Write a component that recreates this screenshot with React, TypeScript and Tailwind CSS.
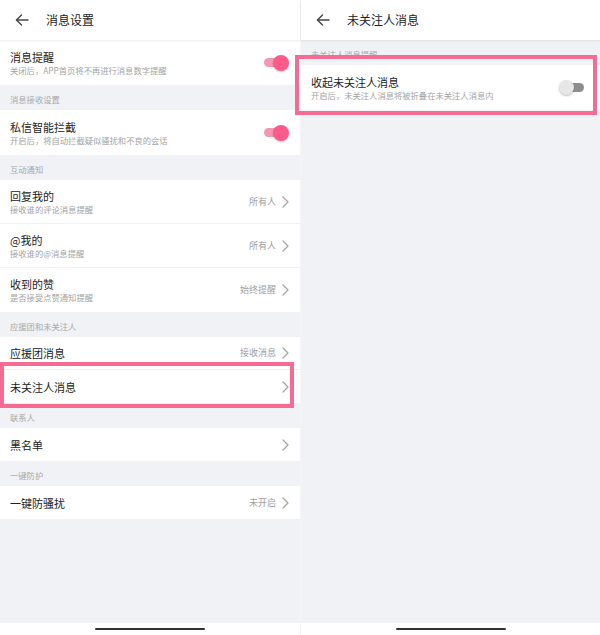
const font = { fontFamily: '"Noto Sans CJK SC", "Noto Sans", sans-serif' };

function BackArrow() {
  return (
    <svg width="14" height="12" viewBox="0 0 14 12" fill="none" stroke="#444" strokeWidth={1.4} strokeLinecap="round" strokeLinejoin="round">
      <path d="M13 6H1.5" />
      <path d="M6.5 1L1.5 6l5 5" />
    </svg>
  );
}

function Chevron() {
  return (
    <svg width="7" height="12" viewBox="0 0 7 12" fill="none" stroke="#a3a3a3" strokeWidth={1.2} strokeLinecap="round" strokeLinejoin="round">
      <path d="M1 1l5 5-5 5" />
    </svg>
  );
}

function ToggleOn() {
  return (
    <div className="relative w-[25px] h-4">
      <div className="absolute left-0 top-[3.5px] w-[21px] h-[9px] rounded-full bg-[#f596b2]" />
      <div className="absolute right-0 top-0 w-4 h-4 rounded-full bg-[#fb5a8b] shadow-[0_1px_2px_rgba(0,0,0,0.2)]" />
    </div>
  );
}

function ToggleOff() {
  return (
    <div className="relative w-[25px] h-[15px]">
      <div className="absolute right-0 top-[3px] w-[18px] h-[9px] rounded-full bg-[#8e8e8e]" />
      <div className="absolute left-0 top-0 w-[15px] h-[15px] rounded-full bg-[#e6e6e6] shadow-[0_1px_2px_rgba(0,0,0,0.25)]" />
    </div>
  );
}

function Header({ title }: { title: string }) {
  return (
    <div className="relative z-10 h-10 bg-white flex items-center shadow-[0_1px_2px_rgba(0,0,0,0.08)]">
      <div className="w-[46px] pl-[15px]">
        <BackArrow />
      </div>
      <span className="text-[12px] text-[#222]">{title}</span>
    </div>
  );
}

function Section({ label }: { label: string }) {
  return (
    <div className="h-[25px] flex items-center pt-[3px] pl-[10px] text-[8.3px] text-[#a8a8a8]">
      {label}
    </div>
  );
}

function SwitchRow({ title, sub, on }: { title: string; sub: string; on: boolean }) {
  return (
    <div className="h-[45px] bg-white flex items-center justify-between pl-[10px] pr-[11px]">
      <div className="flex flex-col">
        <span className="text-[11px] leading-[14px] text-[#222]">{title}</span>
        <span className="text-[8.3px] leading-[12px] text-[#a3a3a3]">{sub}</span>
      </div>
      {on ? <ToggleOn /> : <ToggleOff />}
    </div>
  );
}

function LinkRow({ title, sub, value, border }: { title: string; sub?: string; value?: string; border?: boolean }) {
  return (
    <div className={`${sub ? 'h-[44px]' : 'h-[33px]'} bg-white flex items-center justify-between pl-[10px] pr-[11px] ${border ? 'border-b border-[#f1f1f3]' : ''}`}>
      <div className="flex flex-col">
        <span className="text-[11px] leading-[14px] text-[#222]">{title}</span>
        {sub && <span className="text-[8.3px] leading-[12px] text-[#a3a3a3]">{sub}</span>}
      </div>
      <div className="flex items-center gap-[6px]">
        {value && <span className="text-[9px] text-[#a0a0a0]">{value}</span>}
        <Chevron />
      </div>
    </div>
  );
}

function HomeBar() {
  return (
    <div className="h-3 bg-white flex justify-center pt-[5px]">
      <div className="w-[110px] h-[2px] rounded-full bg-[#333]" />
    </div>
  );
}

export default function App() {
  return (
    <div className="w-[600px] h-[635px] flex bg-[#f1f2f5]" style={font}>
      {/* LEFT: 消息设置 */}
      <div className="w-[300px] h-full flex flex-col">
        <Header title="消息设置" />
        <div className="flex-1 flex flex-col">
          <SwitchRow title="消息提醒" sub="关闭后，APP首页将不再进行消息数字提醒" on />
          <Section label="消息接收设置" />
          <SwitchRow title="私信智能拦截" sub="开启后，将自动拦截疑似骚扰和不良的会话" on />
          <Section label="互动通知" />
          <LinkRow title="回复我的" sub="接收谁的评论消息提醒" value="所有人" border />
          <LinkRow title="@我的" sub="接收谁的@消息提醒" value="所有人" border />
          <LinkRow title="收到的赞" sub="是否接受点赞通知提醒" value="始终提醒" />
          <Section label="应援团和未关注人" />
          <LinkRow title="应援团消息" value="接收消息" border />
          <div className="relative">
            <LinkRow title="未关注人消息" />
            <div className="absolute -top-[8px] -bottom-[5px] left-0 right-[6px] border-4 border-[#f56b94]" />
          </div>
          <Section label="联系人" />
          <LinkRow title="黑名单" />
          <Section label="一键防护" />
          <LinkRow title="一键防骚扰" value="未开启" />
        </div>
        <HomeBar />
      </div>

      {/* RIGHT: 未关注人消息 */}
      <div className="w-[300px] h-full flex flex-col border-l border-[#f6f6f8]">
        <Header title="未关注人消息" />
        <div className="flex-1 flex flex-col">
          <Section label="未关注人消息提醒" />
          <div className="relative">
            <div className="h-[45px] bg-white flex items-center justify-between pl-[10px] pr-[16px]">
              <div className="flex flex-col">
                <span className="text-[11px] leading-[14px] text-[#222]">收起未关注人消息</span>
                <span className="text-[8.3px] leading-[12px] text-[#a3a3a3]">开启后，未关注人消息将被折叠在未关注人消息内</span>
              </div>
              <ToggleOff />
            </div>
            <div className="absolute -top-[10px] -bottom-[5px] -left-[6px] right-[3px] border-4 border-[#f56b94]" />
          </div>
        </div>
        <HomeBar />
      </div>
    </div>
  );
}
